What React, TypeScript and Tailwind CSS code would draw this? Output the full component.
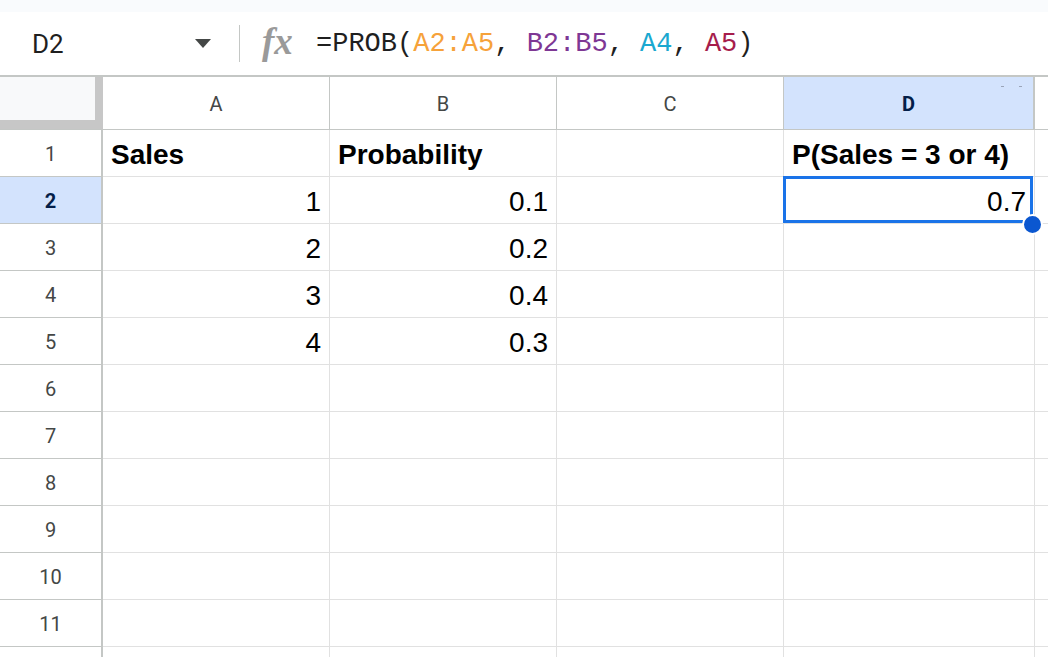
import React from "react";

const cols = [
  { key: "A", w: "w-[227px]" },
  { key: "B", w: "w-[227px]" },
  { key: "C", w: "w-[227px]" },
  { key: "D", w: "w-[251px]" },
];

type Cell = { text: string; bold?: boolean; right?: boolean };

const data: Record<number, Record<string, Cell>> = {
  1: {
    A: { text: "Sales", bold: true },
    B: { text: "Probability", bold: true },
    D: { text: "P(Sales = 3 or 4)", bold: true },
  },
  2: { A: { text: "1", right: true }, B: { text: "0.1", right: true }, D: { text: "0.7", right: true } },
  3: { A: { text: "2", right: true }, B: { text: "0.2", right: true } },
  4: { A: { text: "3", right: true }, B: { text: "0.4", right: true } },
  5: { A: { text: "4", right: true }, B: { text: "0.3", right: true } },
};

const rows = [1, 2, 3, 4, 5, 6, 7, 8, 9, 10, 11, 12];

const App: React.FC = () => {
  return (
    <div className="w-[1048px] h-[657px] overflow-hidden bg-white font-['Liberation_Sans',Arial,sans-serif]">
      {/* Top strip */}
      <div className="h-[12px] bg-[#f9fbfd]" />

      {/* Formula bar */}
      <div className="h-[63px] flex items-center">
        <div className="w-[180px] pl-[32px] text-[26px] text-[#1f1f1f] font-['Roboto',sans-serif] pt-[1px]">
          D2
        </div>
        <div className="w-[46px] flex justify-center">
          <div className="w-0 h-0 border-l-[8px] border-r-[8px] border-t-[9px] border-l-transparent border-r-transparent border-t-[#444746]" />
        </div>
        <div className="ml-[13px] w-[1px] h-[37px] bg-[#c4c7c5]" />
        <div className="ml-[22px] w-[44px] text-[37px] leading-none italic font-bold text-[#9a9a9a] font-['Liberation_Serif',serif] -mt-[4px]">
          fx
        </div>
        <div className="ml-[10px] text-[27px] font-['Liberation_Mono',monospace] text-[#1f1f1f] whitespace-pre pt-[1px]">
          =PROB(<span className="text-[#f6a23a]">A2:A5</span>,{" "}
          <span className="text-[#7e3794]">B2:B5</span>,{" "}
          <span className="text-[#1aa8d0]">A4</span>,{" "}
          <span className="text-[#a61d4c]">A5</span>)
        </div>
      </div>

      {/* Column headers */}
      <div className="flex h-[55px] border-t-2 border-b border-[#c4c7c5]">
        <div className="w-[103px] shrink-0 bg-[#f8f9fa] border-r-[8px] border-b-[9px] border-[#c7c7c7]" />
        {cols.map((c) => {
          const active = c.key === "D";
          return (
            <div
              key={c.key}
              className={`${c.w} shrink-0 relative flex items-center justify-center border-r border-[#c4c7c5] text-[20px] font-['Roboto',sans-serif] pt-[1px] ${
                active ? "bg-[#d3e3fd] text-[#041e49] font-bold border-r-2" : "text-[#444746]"
              }`}
            >
              {c.key}
              {active && (
                <>
                  <span className="absolute top-[9px] left-[217px] w-[3px] h-[1px] bg-[#9aa4b8]" />
                  <span className="absolute top-[9px] left-[235px] w-[3px] h-[1px] bg-[#9aa4b8]" />
                </>
              )}
            </div>
          );
        })}
        <div className="flex-1" />
      </div>

      {/* Rows */}
      {rows.map((r) => {
        const activeRow = r === 2;
        return (
          <div key={r} className="flex h-[47px]">
            <div
              className={`w-[103px] shrink-0 flex items-center justify-center border-r-2 border-b border-[#c4c7c5] text-[20px] font-['Roboto',sans-serif] pt-[1px] ${
                activeRow ? "bg-[#d3e3fd] text-[#041e49] font-bold" : "text-[#444746]"
              }`}
            >
              {r < 12 ? r : ""}
            </div>
            {cols.map((c) => {
              const cell = data[r]?.[c.key];
              const selected = r === 2 && c.key === "D";
              return (
                <div
                  key={c.key}
                  className={`${c.w} shrink-0 relative flex items-center border-r border-b border-[#e1e1e1] text-[28px] text-black pt-[3px] ${
                    cell?.right ? "justify-end pr-[8px]" : "pl-[8px]"
                  } ${cell?.bold ? "font-bold" : ""}`}
                >
                  {cell?.text}
                  {selected && (
                    <>
                      <div className="absolute -left-[1px] -top-[1px] right-[1px] bottom-0 border-[3px] border-[#1a73e8]" />
                      <div className="absolute right-[-9px] bottom-[-12px] w-[21px] h-[21px] rounded-full bg-[#0b57d0] border-2 border-white z-10" />
                    </>
                  )}
                </div>
              );
            })}
            <div className="flex-1 border-b border-[#e1e1e1]" />
          </div>
        );
      })}
    </div>
  );
};

export default App;
